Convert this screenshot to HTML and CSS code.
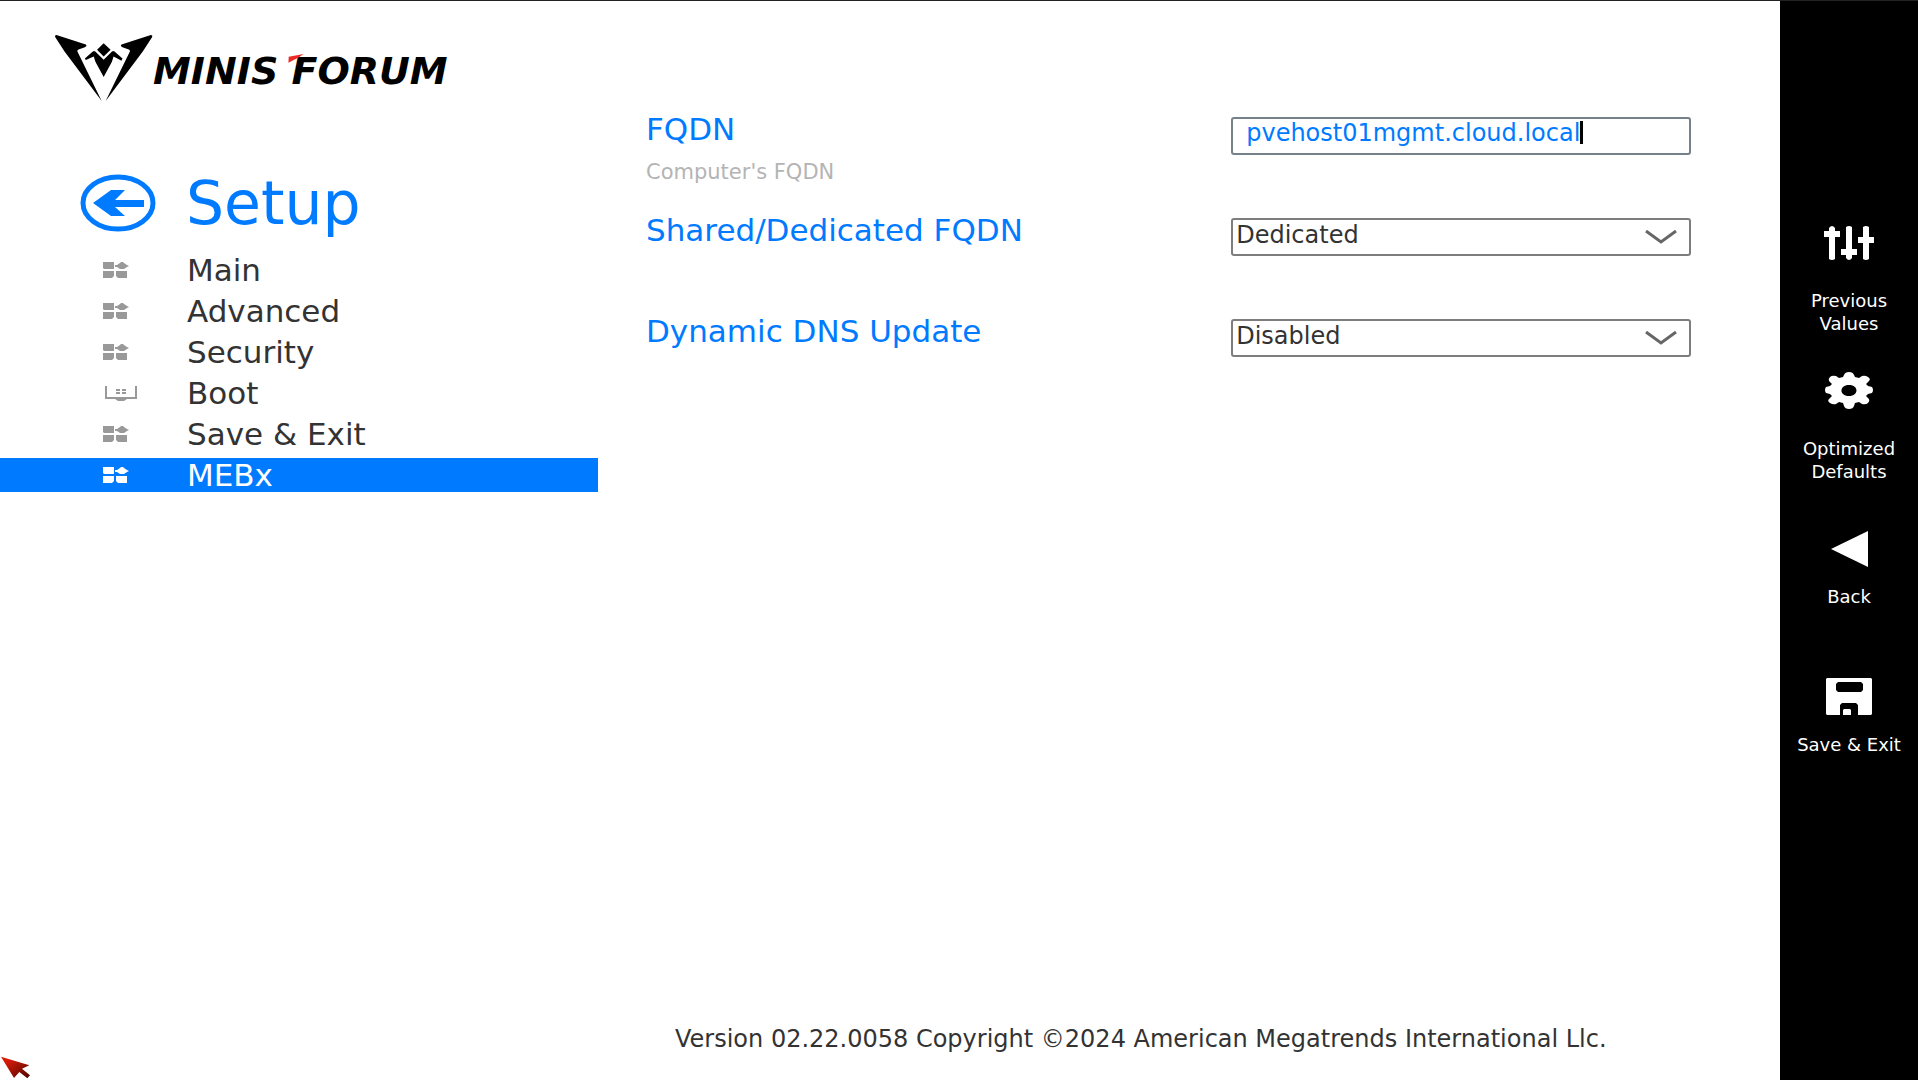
FILE: index.html
```html
<!DOCTYPE html>
<html lang="en">
<head>
    <meta charset="UTF-8">
    <meta name="viewport" content="width=device-width, initial-scale=1.0">
    <title>Setup - MEBx</title>
    <link rel="stylesheet" href="styles.css">
</head>
<body>
    <!-- Shared menu icon -->
    <svg class="defs" width="0" height="0" aria-hidden="true">
        <symbol id="tiles" viewBox="0 0 26 18">
            <path d="M0 1h11v7H1L0 7zM0 10h11v5l-2 2H0zM13 10h11v7H15l-2-2zM12 4h2l3-2 1-1h2l1 1 3 2 2 1-2 1-3 2h-4l-3-2h-2z"/>
        </symbol>
    </svg>

    <div class="screen">
        <div class="sidebar">
            <div class="logo">
                <svg class="emblem" viewBox="70 70 300 206" aria-hidden="true">
                    <path d="M79 73L168 102Q173 107 165 110L146 117Q140 119 144 126L216 273 103 122 75 79Q73 73 79 73z"/>
                    <path d="M365 73L276 102Q271 107 279 110L298 117Q304 119 300 126L228 273 341 122 369 79Q371 73 365 73z"/>
                    <path d="M222 98L243 118 222 138 202 118z"/>
                    <path d="M165 144L190 122H196L222 148 248 122H254L279 144 276 151 252 138 247 154 222 200 197 154 192 138 168 149z"/>
                </svg>
                <div class="wordmark">
                    MINIS FORUM
                    <svg class="accent" viewBox="0 0 44 26" aria-hidden="true"><path d="M1 8L44 0 28 11 0 25z"/></svg>
                </div>
            </div>

            <div class="title">
                <button class="back" type="button" aria-label="Back to menu">
                    <svg viewBox="0 0 76 58" aria-hidden="true">
                        <ellipse cx="38" cy="29" rx="35" ry="26"/>
                        <path d="M13 29L31 16H45L35 26H64V33H35L45 42H31z"/>
                    </svg>
                </button>
                <h1>Setup</h1>
            </div>

            <nav class="menu">
                <a href="#main"><svg><use href="#tiles"/></svg>Main</a>
                <a href="#advanced"><svg><use href="#tiles"/></svg>Advanced</a>
                <a href="#security"><svg><use href="#tiles"/></svg>Security</a>
                <a href="#boot">
                    <svg class="boot" viewBox="0 0 34 18">
                        <path d="M2 2h2v11h28V2h2v13H24l-3 2h-6l-3-2H2zM13 5h4v2h-4zM19 5h4v2h-4zM13 8h4v2h-4zM19 8h4v2h-4z"/>
                    </svg>Boot</a>
                <a href="#save"><svg><use href="#tiles"/></svg>Save &amp; Exit</a>
                <a class="active" href="#mebx"><svg><use href="#tiles"/></svg>MEBx</a>
            </nav>
        </div>

        <main class="content">
            <form class="settings">
                <div class="row">
                    <div>
                        <label for="fqdn">FQDN</label>
                        <p class="help">Computer's FQDN</p>
                    </div>
                    <div class="field text">
                        <input type="text" id="fqdn" value="pvehost01mgmt.cloud.local" spellcheck="false">
                        <span class="caret"></span>
                    </div>
                </div>
                <div class="row">
                    <label for="shared">Shared/Dedicated FQDN</label>
                    <div class="field">
                        <select id="shared">
                            <option>Dedicated</option>
                            <option>Shared</option>
                        </select>
                        <svg class="chevron" viewBox="0 0 32 14" aria-hidden="true"><path d="M1 1L16 12 31 1"/></svg>
                    </div>
                </div>
                <div class="row">
                    <label for="dns">Dynamic DNS Update</label>
                    <div class="field">
                        <select id="dns">
                            <option>Disabled</option>
                            <option>Enabled</option>
                        </select>
                        <svg class="chevron" viewBox="0 0 32 14" aria-hidden="true"><path d="M1 1L16 12 31 1"/></svg>
                    </div>
                </div>
            </form>
            <footer>Version 02.22.0058 Copyright ©2024 American Megatrends International Llc.</footer>
        </main>

        <aside class="actions">
            <button type="button">
                <svg viewBox="0 0 56 60" aria-hidden="true">
                    <path d="M8 13q3-4 6 0v3h5v6h-5v22q-3 2-6 0V22H3v-6h5zM25 12q3-2 6 0v22h5v6h-5v3q-3 4-6 0v-3h-5v-6h5zM42 12q3-2 6 0v10h5v6h-5v16q-3 2-6 0V28h-5v-6h5z"/>
                </svg>
                <span>Previous<br>Values</span>
            </button>
            <button type="button">
                <svg viewBox="0 0 56 60" aria-hidden="true">
                    <path fill-rule="evenodd" d="M23 12Q24 9 28 9T33 12L34 14 38 15 41 13Q44 12 47 14T48 18L45 21 47 23 51 24Q53 27 51 30L47 31 45 33 48 36Q49 38 47 40T41 41L38 39 34 40 33 43Q32 46 28 46T23 43L22 40 18 39 15 41Q12 42 9 40T8 36L11 33 9 31 5 30Q3 27 5 24L9 23 11 21 8 18Q7 16 9 14T15 13L18 15 22 14zM28 22C18 22 18 33 28 33S38 22 28 22z"/>
                </svg>
                <span>Optimized<br>Defaults</span>
            </button>
            <button type="button">
                <svg viewBox="0 0 56 60" aria-hidden="true"><path d="M10 38L47 20V56z"/></svg>
                <span>Back</span>
            </button>
            <button type="button">
                <svg viewBox="0 0 56 60" aria-hidden="true">
                    <path fill-rule="evenodd" d="M6 19H50l1 1V55l-1 1H37V46l-2-2H21l-2 2V56H6l-1-1V20zM17 23l-2 2v6l2 2H40l2-2V25l-2-2z"/>
                    <path d="M23 50h6l1 1v5h-8v-5z"/>
                </svg>
                <span>Save &amp; Exit</span>
            </button>
        </aside>
    </div>

    <svg class="pointer" viewBox="0 0 90 72" aria-hidden="true">
        <defs>
            <linearGradient id="red" x1="0" y1="0" x2="1" y2="1">
                <stop offset="0.2" stop-color="#d81c06"/>
                <stop offset="1" stop-color="#4a0500"/>
            </linearGradient>
        </defs>
        <path d="M3 2L88 28 66 38 90 58 82 67 58 48 42 66z"/>
    </svg>
</body>
</html>
```
FILE: styles.css
```css
* {
    box-sizing: border-box;
}

body {
    margin: 0;
    font-family: "DejaVu Sans", sans-serif;
    font-size: 24px;
    color: #333;
    background: #fff;
}

button, input, select {
    font: inherit;
    color: inherit;
    background: none;
    border: none;
    padding: 0;
    margin: 0;
}

button {
    cursor: pointer;
}

.defs {
    position: absolute;
}

.screen {
    display: grid;
    grid-template-columns: 598fr 1182fr 138px;
    min-height: 100vh;
    border-top: 1px solid #222;
}

/* Left column */
.logo {
    display: flex;
    padding: 33px 0 0 53px;
}

.emblem {
    width: 100px;
    height: 68px;
}

.wordmark {
    position: relative;
    padding-top: 15px;
    font-size: 38px;
    font-style: italic;
    font-weight: bold;
    line-height: 44px;
    color: #000;
    white-space: nowrap;
}

.accent {
    position: absolute;
    left: 135px;
    top: 20px;
    width: 16px;
    height: 9px;
    fill: #ee2a24;
}

.title {
    display: flex;
    align-items: center;
    gap: 30px;
    height: 82px;
    margin-top: 60px;
    padding-left: 80px;
    color: #007bff;
}

.title h1 {
    margin: 0;
    font-size: 60px;
    font-weight: normal;
    line-height: 80px;
}

.back svg {
    display: block;
    width: 76px;
    height: 58px;
    fill: #007bff;
}

.back ellipse {
    fill: none;
    stroke: #007bff;
    stroke-width: 5;
}

.menu {
    display: grid;
    gap: 7px;
    margin-top: 9px;
}

.menu a {
    display: grid;
    grid-template-columns: 84px 1fr;
    align-items: center;
    height: 34px;
    padding-left: 103px;
    font-size: 31px;
    line-height: 32px;
    color: #333;
    text-decoration: none;
}

.menu svg {
    width: 26px;
    height: 18px;
    fill: #999;
}

.menu .boot {
    width: 34px;
}

.menu .active {
    color: #fff;
    background: #007bff;
}

.menu .active svg {
    fill: #fff;
}

/* Settings */
.content {
    display: flex;
    flex-direction: column;
    justify-content: space-between;
    padding: 110px 89px 25px 48px;
}

.row {
    display: grid;
    grid-template-columns: 14fr 11fr;
    align-items: start;
    min-height: 101px;
}

.row label {
    display: block;
    font-size: 31px;
    line-height: 36px;
    color: #007bff;
}

.help {
    margin: 11px 0 0;
    font-size: 21px;
    line-height: 28px;
    color: #b4b4b4;
}

.field {
    position: relative;
    height: 38px;
    margin-top: 6px;
    border: 2px solid #7d7d7d;
    border-radius: 3px;
}

.field select {
    display: block;
    width: 100%;
    height: 30px;
    padding-left: 3px;
    line-height: 30px;
    appearance: none;
}

.chevron {
    position: absolute;
    right: 12px;
    top: 10px;
    width: 32px;
    height: 14px;
    fill: none;
    stroke: #666;
    stroke-width: 3;
    pointer-events: none;
}

.text {
    display: flex;
    align-items: flex-start;
    padding-left: 13px;
    border-color: #75828a;
}

.text input {
    field-sizing: content;
    height: 28px;
    line-height: 28px;
    color: #007bff;
    outline: none;
}

.caret {
    width: 3px;
    height: 23px;
    margin-top: 2px;
    background: #000;
}

footer {
    padding-left: 29px;
    line-height: 32px;
    white-space: nowrap;
}

/* Right rail */
.actions {
    padding-top: 204px;
    color: #fff;
    background: #000;
}

.actions button {
    display: flex;
    flex-direction: column;
    align-items: center;
    gap: 14px;
    width: 100%;
    height: 148px;
    padding-top: 10px;
    font-size: 18px;
    line-height: 23px;
}

.actions svg {
    width: 56px;
    height: 60px;
    fill: #fff;
}

.pointer {
    position: fixed;
    left: 0;
    bottom: 0;
    width: 30px;
    height: 24px;
    fill: url(#red);
}
```
